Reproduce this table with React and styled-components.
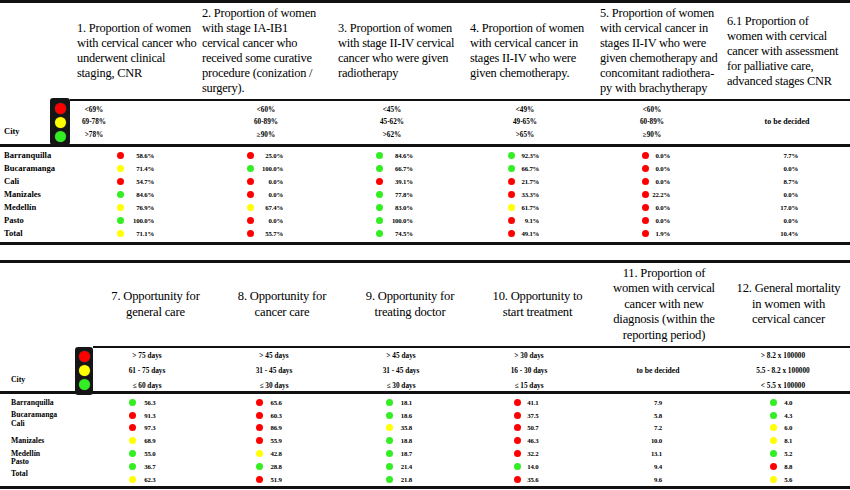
import React from 'react'
import styled, { createGlobalStyle } from 'styled-components'

const GlobalStyle = createGlobalStyle`
  body {
    margin: 0;
    background: #fff;
    color: #000;
    font-family: "Liberation Serif", "Times New Roman", serif;
  }
`

const tones = { r: '#ff0000', y: '#ffff00', g: '#33ee22' }

const Page = styled.div`
  width: 850px;
  display: flex;
  flex-direction: column;
`

const Table = styled.section`
  border-top: 3px solid #111;
  border-bottom: 3px solid #111;
  margin-top: ${p => p.$gap || 0}px;
`

const Row = styled.div`
  display: grid;
  grid-template-columns: ${p => p.$cols};
`

const HeadRow = styled(Row)`
  height: ${p => p.$h}px;
  align-items: center;
`

const HeadCell = styled.div`
  padding-left: ${p => p.$pl || 0}px;
  font-size: ${p => p.$size}px;
  line-height: ${p => p.$lh}px;
  letter-spacing: -0.2px;
  white-space: nowrap;
  text-align: ${p => (p.$center ? 'center' : 'left')};
`

const ThreshRow = styled(Row)`
  height: ${p => p.$h}px;
  border-bottom: 3px solid #111;
`

const ThreshCell = styled.div`
  border-top: 2px solid #111;
  display: flex;
  flex-direction: column;
  justify-content: center;
  align-items: center;
  text-align: center;
  padding-right: ${p => p.$pr || 0}px;
  font-weight: bold;
  font-size: ${p => p.$size}px;
  line-height: ${p => p.$lh}px;
  white-space: nowrap;
`

const Pending = styled.span`
  font-size: ${p => p.$size}px;
`

const CityHead = styled.div`
  display: flex;
  justify-content: space-between;
  align-items: flex-end;
  padding-left: ${p => p.$pl}px;
`

const CityLabel = styled.span`
  font-weight: bold;
  font-size: ${p => p.$size}px;
  padding-bottom: ${p => p.$pb}px;
`

const Housing = styled.div`
  align-self: stretch;
  width: ${p => p.$w}px;
  margin: ${p => p.$mt}px 0 ${p => p.$mb}px;
  padding-top: ${p => p.$pt}px;
  background: #151515;
  border-radius: 3px;
  display: flex;
  flex-direction: column;
  align-items: center;
  gap: 3px;
`

const Lamp = styled.span`
  width: 11px;
  height: 11px;
  border-radius: 50%;
  background: ${p => tones[p.$tone]};
  box-shadow: 0 0 0 0.5px #333;
`

const Body = styled(Row)`
  grid-template-rows: repeat(7, ${p => p.$rh}px);
  padding: ${p => p.$pt}px 0 ${p => p.$pb}px;
  align-items: center;
`

const CityCell = styled.div`
  padding-left: ${p => p.$pl}px;
  padding-bottom: ${p => p.$lift || 0}px;
  font-weight: bold;
  font-size: ${p => p.$size}px;
  line-height: 1;
  white-space: nowrap;
`

const DataCell = styled.div`
  display: flex;
  align-items: center;
  padding-left: ${p => p.$pl}px;
  gap: ${p => p.$gap || 0}px;
  font-weight: bold;
  font-size: ${p => p.$size}px;
  letter-spacing: -0.2px;
  white-space: nowrap;
`

const Dot = styled.span`
  flex: none;
  width: 7px;
  height: 7px;
  border-radius: 50%;
  background: ${p => tones[p.$tone]};
`

const Value = styled.span`
  width: ${p => (p.$w ? `${p.$w}px` : 'auto')};
  text-align: ${p => (p.$right ? 'right' : 'left')};
`

function TrafficLight({ w, mt, mb, pt }) {
  return (
    <Housing $w={w} $mt={mt} $mb={mb} $pt={pt}>
      <Lamp $tone="r" />
      <Lamp $tone="y" />
      <Lamp $tone="g" />
    </Housing>
  )
}

const cities = ['Barranquilla', 'Bucaramanga', 'Cali', 'Manizales', 'Medellín', 'Pasto', 'Total']

// ---------- first table ----------
const topCols = '70px 130px 135px 133px 130px 127px 125px'

const topHeads = [
  { pl: 7, lines: ['1. Proportion of women', 'with cervical cancer who', 'underwent clinical', 'staging, CNR'] },
  { pl: 2, lines: ['2. Proportion of women', 'with stage IA-IB1', 'cervical cancer who', 'received some curative', 'procedure (conization /', 'surgery).'] },
  { pl: 3, lines: ['3. Proportion of women', 'with stage II-IV cervical', 'cancer who were given', 'radiotherapy'] },
  { pl: 2, lines: ['4. Proportion of women', 'with cervical cancer in', 'stages II-IV who were', 'given chemotherapy.'] },
  { pl: 2, lines: ['5. Proportion of women', 'with cervical cancer in', 'stages II-IV who were', 'given chemotherapy and', 'concomitant radiothera-', 'py with brachytherapy'] },
  { pl: 2, lines: ['6.1 Proportion of', 'women with cervical', 'cancer with assessment', 'for palliative care,', 'advanced stages CNR'] },
]

const topThresh = [
  { pr: 82, lines: ['<69%', '69-78%', '>78%'] },
  { pr: 3, lines: ['<60%', '60-89%', '≥90%'] },
  { pr: 19, lines: ['<45%', '45-62%', '>62%'] },
  { pr: 16, lines: ['<49%', '49-65%', '>65%'] },
  { pr: 19, lines: ['<60%', '60-89%', '≥90%'] },
  { pr: 1, pending: true },
]

// dot start and value width per column
const topCells = [
  { pl: 46.5, vw: 30.5 },
  { pl: 46.5, vw: 29.5 },
  { pl: 40.8, vw: 30 },
  { pl: 40.2, vw: 24 },
  { pl: 43.5, vw: 21.5 },
  { pl: 0, vw: 73 },
]

const topData = [
  [['58.6%', 'r'], ['25.0%', 'r'], ['84.6%', 'g'], ['92.3%', 'g'], ['0.0%', 'r'], ['7.7%']],
  [['71.4%', 'y'], ['100.0%', 'g'], ['66.7%', 'g'], ['66.7%', 'g'], ['0.0%', 'r'], ['0.0%']],
  [['54.7%', 'r'], ['0.0%', 'r'], ['39.1%', 'r'], ['21.7%', 'r'], ['0.0%', 'r'], ['8.7%']],
  [['84.6%', 'g'], ['0.0%', 'r'], ['77.8%', 'g'], ['33.3%', 'r'], ['22.2%', 'r'], ['0.0%']],
  [['76.9%', 'y'], ['67.4%', 'y'], ['83.0%', 'g'], ['61.7%', 'y'], ['0.0%', 'r'], ['17.0%']],
  [['100.0%', 'g'], ['0.0%', 'r'], ['100.0%', 'g'], ['9.1%', 'r'], ['0.0%', 'r'], ['0.0%']],
  [['71.1%', 'y'], ['55.7%', 'r'], ['74.5%', 'g'], ['49.1%', 'r'], ['1.9%', 'r'], ['10.4%']],
]

// ---------- second table ----------
const botCols = '93px 125px 128px 128px 127px 126px 123px'

const botHeads = [
  ['7. Opportunity for', 'general care'],
  ['8. Opportunity for', 'cancer care'],
  ['9. Opportunity for', 'treating doctor'],
  ['10. Opportunity to', 'start treatment'],
  ['11. Proportion of', 'women with cervical', 'cancer with new', 'diagnosis (within the', 'reporting period)'],
  ['12. General mortality', 'in women with', 'cervical cancer'],
]

const botThresh = [
  { pr: 17, lines: ['> 75 days', '61 - 75 days', '≤ 60 days'] },
  { pr: 16, lines: ['> 45 days', '31 - 45 days', '≤ 30 days'] },
  { pr: 18, lines: ['> 45 days', '31 - 45 days', '≤ 30 days'] },
  { pr: 17, lines: ['> 30 days', '16 - 30 days', '≤ 15 days'] },
  { pr: 12, pending: true },
  { pr: 11, lines: ['> 8.2 x 100000', '5.5 - 8.2 x 100000', '< 5.5 x 100000'] },
]

const botCells = [
  { pl: 35.8, gap: 8.5 },
  { pl: 37.5, gap: 8 },
  { pl: 39.8, gap: 8 },
  { pl: 39.8, gap: 6.5 },
  { pl: 0, vw: 61 },
  { pl: 42.8, gap: 7.5 },
]

// city labels in the second table sit a little above their rows
const botLift = [0, 0, 9, 0, 0, 9, 10]

const botData = [
  [['56.3', 'g'], ['65.6', 'r'], ['18.1', 'g'], ['41.1', 'r'], ['7.9'], ['4.0', 'g']],
  [['91.3', 'r'], ['60.3', 'r'], ['18.6', 'g'], ['37.5', 'r'], ['5.8'], ['4.3', 'g']],
  [['97.3', 'r'], ['86.9', 'r'], ['35.8', 'y'], ['50.7', 'r'], ['7.2'], ['6.0', 'y']],
  [['68.9', 'y'], ['55.9', 'r'], ['18.8', 'g'], ['46.3', 'r'], ['10.0'], ['8.1', 'y']],
  [['55.0', 'g'], ['42.8', 'y'], ['18.7', 'g'], ['32.2', 'r'], ['13.1'], ['5.2', 'g']],
  [['36.7', 'g'], ['28.8', 'g'], ['21.4', 'g'], ['14.0', 'g'], ['9.4'], ['8.8', 'r']],
  [['62.3', 'y'], ['51.9', 'r'], ['21.8', 'g'], ['35.6', 'r'], ['9.6'], ['5.6', 'y']],
]

const lines = arr => arr.map((l, i) => (
  <React.Fragment key={i}>{l}{i < arr.length - 1 && <br />}</React.Fragment>
))

function App() {
  return (
    <Page>
      <GlobalStyle />

      <Table>
        <HeadRow $cols={topCols} $h={96}>
          <div />
          {topHeads.map((h, i) => (
            <HeadCell key={i} $pl={h.pl} $size={12.4} $lh={15}>{lines(h.lines)}</HeadCell>
          ))}
        </HeadRow>
        <ThreshRow $cols={topCols} $h={45}>
          <CityHead $pl={4}>
            <CityLabel $size={8.5} $pb={8}>City</CityLabel>
            <TrafficLight w={20} mt={-1} mb={-1} pt={5} />
          </CityHead>
          {topThresh.map((t, i) => (
            <ThreshCell key={i} $pr={t.pr} $size={7.2} $lh={12.5}>
              {t.pending ? <Pending $size={8}>to be decided</Pending> : lines(t.lines)}
            </ThreshCell>
          ))}
        </ThreshRow>
        <Body $cols={topCols} $rh={13} $pt={2} $pb={2}>
          {topData.map((row, r) => (
            <React.Fragment key={r}>
              <CityCell $pl={4} $size={8.5}>{cities[r]}</CityCell>
              {row.map(([v, tone], c) => (
                <DataCell key={c} $pl={topCells[c].pl} $size={6.8}>
                  {tone && <Dot $tone={tone} />}
                  <Value $w={topCells[c].vw} $right>{v}</Value>
                </DataCell>
              ))}
            </React.Fragment>
          ))}
        </Body>
      </Table>

      <Table $gap={15}>
        <HeadRow $cols={botCols} $h={83}>
          <div />
          {botHeads.map((h, i) => (
            <HeadCell key={i} $center $size={12.6} $lh={15.5}>{lines(h)}</HeadCell>
          ))}
        </HeadRow>
        <ThreshRow $cols={botCols} $h={45}>
          <CityHead $pl={11}>
            <CityLabel $size={7.7} $pb={9}>City</CityLabel>
            <TrafficLight w={18} mt={1} mb={-2} pt={3.5} />
          </CityHead>
          {botThresh.map((t, i) => (
            <ThreshCell key={i} $pr={t.pr} $size={7.3} $lh={15}>
              {t.pending ? <Pending $size={7.7}>to be decided</Pending> : lines(t.lines)}
            </ThreshCell>
          ))}
        </ThreshRow>
        <Body $cols={botCols} $rh={12.8} $pt={2} $pb={0.4}>
          {botData.map((row, r) => (
            <React.Fragment key={r}>
              <CityCell $pl={11} $size={7.7} $lift={botLift[r]}>{cities[r]}</CityCell>
              {row.map(([v, tone], c) => (
                <DataCell key={c} $pl={botCells[c].pl} $gap={botCells[c].gap} $size={6.8}>
                  {tone && <Dot $tone={tone} />}
                  <Value $w={botCells[c].vw} $right={!tone}>{v}</Value>
                </DataCell>
              ))}
            </React.Fragment>
          ))}
        </Body>
      </Table>
    </Page>
  )
}

export default App
